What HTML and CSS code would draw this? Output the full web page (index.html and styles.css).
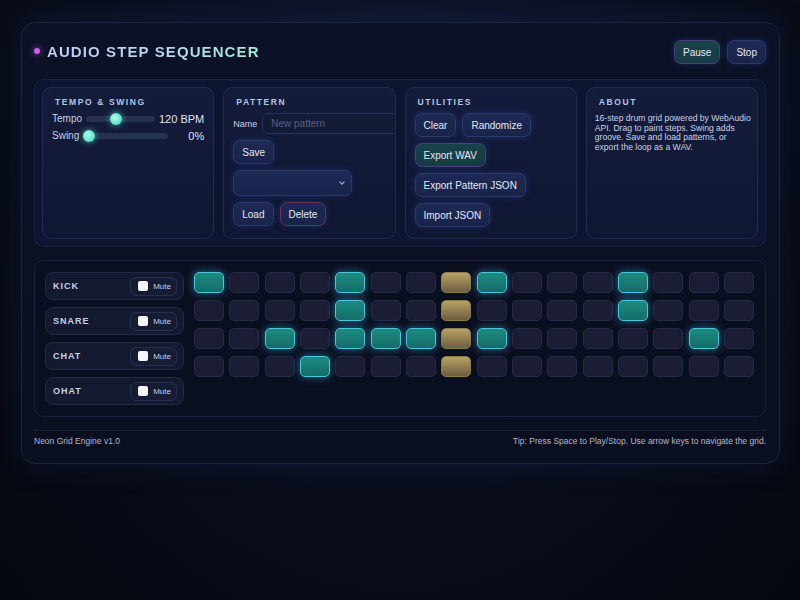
FILE: index.html
```html
<!DOCTYPE html>
<html lang="en">
<head>
  <meta charset="UTF-8">
  <meta name="viewport" content="width=device-width, initial-scale=1">
  <title>Audio Step Sequencer</title>
  <link rel="stylesheet" href="styles.css">
</head>
<body>
  <div class="app">
    <header class="app-header">
      <h1 class="title"><span class="dot"></span><span class="title-text">AUDIO STEP SEQUENCER</span></h1>
      <div class="transport">
        <button class="btn btn-teal">Pause</button>
        <button class="btn">Stop</button>
      </div>
    </header>

    <section class="controls">
      <div class="card">
        <h2>Tempo &amp; Swing</h2>
        <div class="slider-row">
          <label>Tempo</label>
          <input type="range" min="60" max="200" value="120">
          <span class="value">120 BPM</span>
        </div>
        <div class="slider-row">
          <label>Swing</label>
          <input type="range" min="0" max="100" value="0">
          <span class="value">0%</span>
        </div>
      </div>

      <div class="card">
        <h2>Pattern</h2>
        <div class="stack">
          <div class="name-row">
            <label>Name</label>
            <input type="text" placeholder="New pattern">
          </div>
          <div><button class="btn">Save</button></div>
          <div class="select-wrap"><select></select></div>
          <div class="btn-row">
            <button class="btn">Load</button>
            <button class="btn btn-danger">Delete</button>
          </div>
        </div>
      </div>

      <div class="card">
        <h2>Utilities</h2>
        <div class="stack">
          <div class="btn-row">
            <button class="btn">Clear</button>
            <button class="btn">Randomize</button>
          </div>
          <div><button class="btn btn-teal">Export WAV</button></div>
          <div><button class="btn">Export Pattern JSON</button></div>
          <div><button class="btn">Import JSON</button></div>
        </div>
      </div>

      <div class="card">
        <h2>About</h2>
        <p class="about">16-step drum grid powered by WebAudio API. Drag to paint steps. Swing adds groove. Save and load patterns, or export the loop as a WAV.</p>
      </div>
    </section>

    <section class="sequencer">
      <div class="tracks">
        <div class="track"><span>KICK</span><label class="mute"><input type="checkbox"> Mute</label></div>
        <div class="track"><span>SNARE</span><label class="mute"><input type="checkbox"> Mute</label></div>
        <div class="track"><span>CHAT</span><label class="mute"><input type="checkbox"> Mute</label></div>
        <div class="track"><span>OHAT</span><label class="mute"><input type="checkbox"> Mute</label></div>
      </div>
      <div class="grid" id="grid"></div>
    </section>

    <footer class="app-footer">
      <span>Neon Grid Engine v1.0</span>
      <span>Tip: Press Space to Play/Stop. Use arrow keys to navigate the grid.</span>
    </footer>
  </div>

  <script>
    // steps per track, playhead on step 8
    const pattern = [
      [0, 4, 8, 12],
      [4, 12],
      [2, 4, 5, 6, 8, 14],
      [3]
    ];
    const playhead = 7;
    const grid = document.getElementById("grid");

    pattern.forEach(steps => {
      for (let i = 0; i < 16; i++) {
        const cell = document.createElement("div");
        cell.className = "step";
        if (steps.includes(i)) cell.classList.add("on");
        if (i === playhead) cell.classList.add("playing");
        grid.appendChild(cell);
      }
    });
  </script>
</body>
</html>
```

FILE: styles.css
```css
body {
  margin: 0;
  min-height: 600px;
  font-family: "Liberation Sans", Arial, sans-serif;
  color: #dbe3f3;
  background: radial-gradient(ellipse at 50% 10%, #10162c 0%, #0a0e1d 55%, #05070e 100%);
}

.app {
  width: 732px;
  margin: 22px 0 0 21px;
  padding: 17px 13px 17px 12px;
  background: linear-gradient(180deg, #0c1226 0%, #0a0f1f 100%);
  border: 1px solid #1b2446;
  border-radius: 14px;
  box-shadow: 0 0 30px rgba(30, 50, 120, 0.25);
}

.app-header {
  display: flex;
  justify-content: space-between;
  align-items: center;
  height: 26px;
}

.title {
  display: flex;
  align-items: center;
  gap: 7px;
  margin: -4px 0 0 0;
  font-size: 15px;
  font-weight: bold;
  letter-spacing: 1.1px;
}

.dot {
  width: 6px;
  height: 6px;
  border-radius: 50%;
  background: #c362e6;
  box-shadow: 0 0 6px #9a49d6;
}

.title-text {
  background: linear-gradient(90deg, #c4cdf7 0%, #b7d8f0 55%, #9ff0da 100%);
  -webkit-background-clip: text;
  background-clip: text;
  color: transparent;
}

.transport {
  display: flex;
  gap: 7px;
  margin-top: -2px;
}

.btn {
  height: 24px;
  padding: 0 8px;
  font-family: "Liberation Sans", Arial, sans-serif;
  font-size: 10px;
  color: #e2e8f6;
  background: linear-gradient(180deg, #1e2a54 0%, #19234a 100%);
  border: 1px solid #2d3b6c;
  border-radius: 7px;
  box-shadow: 0 0 6px rgba(50, 80, 170, 0.35);
  cursor: pointer;
}

.btn-teal {
  background: linear-gradient(180deg, #17434a 0%, #173a44 100%);
  border-color: #4a3f7e;
}

.btn-danger {
  border-color: #6b3358;
}

.controls {
  display: grid;
  grid-template-columns: repeat(4, 1fr);
  gap: 9px;
  margin-top: 13px;
  padding: 7px;
  background: #0e1530;
  border: 1px solid #19224a;
  border-radius: 10px;
}

.card {
  box-sizing: border-box;
  height: 152px;
  padding: 8px 9px;
  background: linear-gradient(180deg, #141c3b 0%, #101733 100%);
  border: 1px solid #212b52;
  border-radius: 9px;
  overflow: hidden;
}

.card h2 {
  margin: 1px 0 3px 3px;
  font-size: 8.5px;
  text-transform: uppercase;
  letter-spacing: 1.6px;
  color: #b4c6e2;
}

.slider-row {
  display: flex;
  align-items: center;
  gap: 4px;
  height: 17px;
  font-size: 10px;
  color: #c6d0e2;
}

.slider-row .value {
  min-width: 32px;
  text-align: right;
  font-size: 11px;
  color: #dfe6f4;
}

.slider-row input[type="range"] {
  flex: 1;
  min-width: 0;
  margin: 0;
  height: 12px;
  -webkit-appearance: none;
  appearance: none;
  background: transparent;
}

.slider-row input[type="range"]::-webkit-slider-runnable-track {
  height: 6px;
  background: #243153;
  border-radius: 3px;
}

.slider-row input[type="range"]::-webkit-slider-thumb {
  -webkit-appearance: none;
  width: 12px;
  height: 12px;
  margin-top: -3px;
  border-radius: 50%;
  background: radial-gradient(circle at 40% 40%, #b4fff0 0%, #5fe8c8 60%, #3cc8ad 100%);
  box-shadow: 0 0 6px rgba(90, 240, 210, 0.7);
}

.stack {
  display: flex;
  flex-direction: column;
  gap: 6px;
  margin-top: 6px;
}

.name-row {
  display: flex;
  align-items: center;
  gap: 5px;
  font-size: 9px;
  color: #c6d0e2;
}

.name-row input {
  flex: 1;
  min-width: 0;
  height: 21px;
  box-sizing: border-box;
  margin-right: -12px;
  padding: 0 8px;
  font-family: "Liberation Sans", Arial, sans-serif;
  font-size: 10px;
  color: #dfe6f4;
  background: #121a36;
  border: 1px solid #28345e;
  border-radius: 6px;
}

.name-row input::placeholder {
  color: #566081;
}

.select-wrap {
  position: relative;
  width: 119px;
}

.select-wrap select {
  width: 100%;
  height: 26px;
  -webkit-appearance: none;
  appearance: none;
  background: linear-gradient(180deg, #1d2a55 0%, #19244b 100%);
  border: 1px solid #2c3a6a;
  border-radius: 7px;
  box-shadow: 0 0 6px rgba(50, 80, 170, 0.3);
}

.select-wrap::after {
  content: "";
  position: absolute;
  right: 8px;
  top: 10px;
  width: 3px;
  height: 3px;
  border-right: 1px solid #aeb8d0;
  border-bottom: 1px solid #aeb8d0;
  transform: rotate(45deg);
}

.btn-row {
  display: flex;
  gap: 6px;
}

.about {
  margin: 7px -4px 0 -1px;
  font-size: 8.6px;
  line-height: 9.7px;
  color: #c9d3e6;
}

.sequencer {
  display: flex;
  gap: 10px;
  margin-top: 13px;
  padding: 11px 11px 11px 10px;
  background: #0a0f20;
  border: 1px solid #18213f;
  border-radius: 10px;
}

.tracks {
  display: flex;
  flex-direction: column;
  gap: 7px;
  width: 139px;
}

.track {
  display: flex;
  justify-content: space-between;
  align-items: center;
  height: 26px;
  padding: 0 6px 0 7px;
  background: #131a30;
  border: 1px solid #222a47;
  border-radius: 8px;
  font-size: 9px;
  font-weight: bold;
  letter-spacing: 1px;
  color: #c8d1e3;
}

.mute {
  display: flex;
  align-items: center;
  gap: 5px;
  height: 17px;
  padding: 0 5px 0 7px;
  font-size: 8px;
  font-weight: normal;
  letter-spacing: 0;
  color: #c8d1e3;
  background: #161c34;
  border: 1px solid #283050;
  border-radius: 6px;
}

.mute input {
  -webkit-appearance: none;
  appearance: none;
  width: 10px;
  height: 10px;
  margin: 0;
  background: #f4f6fb;
  border-radius: 2px;
}

.grid {
  flex: 1;
  display: grid;
  grid-template-columns: repeat(16, 1fr);
  grid-auto-rows: 21px;
  gap: 7px 5.5px;
  align-content: start;
}

.step {
  background: #1b1d35;
  border: 1px solid #272b47;
  border-radius: 5px;
}

.step.on {
  background: linear-gradient(180deg, #1b8b80 0%, #156c68 100%);
  border-color: #4cc6dc;
  box-shadow: 0 0 8px rgba(60, 190, 230, 0.55);
}

.step.playing {
  background: linear-gradient(180deg, #b9a266 0%, #6c5e3e 100%);
  border-color: #8c7a4c;
  box-shadow: none;
}

.app-footer {
  display: flex;
  justify-content: space-between;
  margin-top: 13px;
  padding-top: 5px;
  border-top: 1px solid #172038;
  font-size: 8.5px;
  color: #aeb8cc;
}
```
